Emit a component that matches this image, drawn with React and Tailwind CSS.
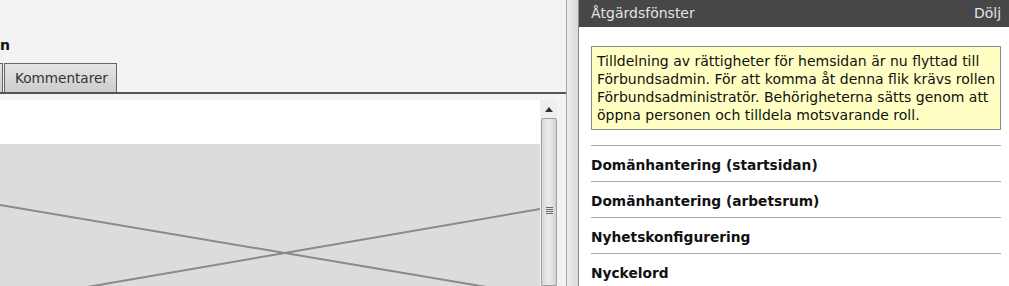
const items = [
    "Domänhantering (startsidan)",
    "Domänhantering (arbetsrum)",
    "Nyhetskonfigurering",
    "Nyckelord",
];

const App = () => {
    return (
        <div className="flex w-[1009px] h-[286px] overflow-hidden bg-white font-['DejaVu_Sans',sans-serif]">
            {/* vänster: redigeringsytan */}
            <div className="w-[566px] shrink-0 flex flex-col bg-[#f3f3f3]">
                <div className="h-[63px] shrink-0 flex items-end pb-[9px]">
                    <span className="text-[14px] font-bold text-[#111] leading-[18px]">n</span>
                </div>
                <div className="h-[31px] shrink-0 flex items-end gap-[1px] border-b-2 border-[#555]">
                    <div className="w-[3px] h-[29px] border-r border-t border-[#666] bg-gradient-to-b from-[#e4e4e4] to-[#cdcdcd]"></div>
                    <div className="h-[29px] w-[113px] flex items-center pl-[10px] border border-b-0 border-[#666] bg-gradient-to-b from-[#e6e6e6] to-[#cccccc] text-[13.6px] text-[#333]">
                        Kommentarer
                    </div>
                </div>
                <div className="flex-1 flex pt-[6px]">
                    <div className="w-[540px] shrink-0 flex flex-col">
                        <div className="h-[44px] bg-white"></div>
                        <div className="flex-1 bg-[#dcdcdc] relative">
                            <svg className="absolute inset-0" width="540" height="142" viewBox="0 0 540 142">
                                <line x1="0" y1="61" x2="540" y2="152" stroke="#8a8a8a" strokeWidth="2" />
                                <line x1="0" y1="158" x2="540" y2="65" stroke="#8a8a8a" strokeWidth="2" />
                            </svg>
                        </div>
                    </div>
                    <div className="w-[16px] shrink-0 ml-[1px] flex flex-col bg-[#efefef]">
                        <div className="h-[18px] flex items-center justify-center">
                            <svg width="8" height="5" viewBox="0 0 8 5"><path d="M0 5 L4 0 L8 5 Z" fill="#333" /></svg>
                        </div>
                        <div className="flex-1 border border-[#a0a0a0] rounded-t-[2px] bg-gradient-to-r from-[#d8d8d8] via-[#ececec] to-[#d2d2d2] flex flex-col items-center pt-[88px] gap-[1px]">
                            <div className="w-[7px] h-[1px] bg-[#666]"></div>
                            <div className="w-[7px] h-[1px] bg-[#666]"></div>
                            <div className="w-[7px] h-[1px] bg-[#666]"></div>
                            <div className="w-[7px] h-[1px] bg-[#666]"></div>
                        </div>
                    </div>
                </div>
            </div>

            {/* avdelare */}
            <div className="w-[13px] shrink-0 border-l border-[#a6a6a6] border-r border-r-[#8c8c8c] bg-gradient-to-r from-[#ececec] to-[#d9d9d9]"></div>

            {/* höger: åtgärdsfönster */}
            <div className="flex-1 flex flex-col bg-white">
                <div className="h-[27px] shrink-0 bg-[#474747] flex items-center justify-between pl-[12px] pr-[9px] text-[14px] text-[#e4e4e4]">
                    <span>Åtgärdsfönster</span>
                    <span>Dölj</span>
                </div>
                <div className="pl-[12px] pr-[9px] pt-[19px]">
                    <div className="border border-[#8a8a8a] bg-[#ffffc4] px-[5px] py-[5px] text-[14px] leading-[18px] text-[#111] whitespace-nowrap overflow-hidden">
                        Tilldelning av rättigheter för hemsidan är nu flyttad till<br />
                        Förbundsadmin. För att komma åt denna flik krävs rollen<br />
                        Förbundsadministratör. Behörigheterna sätts genom att<br />
                        öppna personen och tilldela motsvarande roll.
                    </div>
                    <div className="mt-[15px]">
                        {items.map((item) => (
                            <div key={item} className="h-[36px] border-t border-[#a8a8a8] flex items-center pt-[3px] text-[13.75px] font-bold text-[#111]">
                                {item}
                            </div>
                        ))}
                    </div>
                </div>
            </div>
        </div>
    );
};

export default App;
